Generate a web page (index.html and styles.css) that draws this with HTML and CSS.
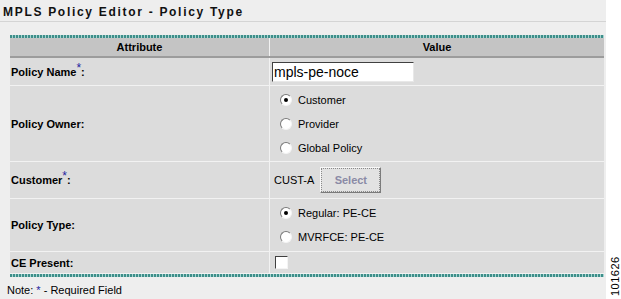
FILE: index.html
```html
<!DOCTYPE html>
<html>
<head>
<meta charset="utf-8">
<link rel="stylesheet" href="styles.css">
</head>
<body>
<div class="page">
  <h1 class="title">MPLS Policy Editor - Policy Type</h1>
  <div class="panel">
    <div class="teal"></div>
    <table class="grid">
      <tr class="head"><th class="c1">Attribute</th><th class="c2">Value</th></tr>
      <tr class="r-name"><td class="lbl">Policy Name<sup class="req">*</sup>:</td><td><input class="txt" type="text" value="mpls-pe-noce"></td></tr>
      <tr class="r-owner"><td class="lbl">Policy Owner:</td><td>
        <div class="radios">
          <label class="opt"><span class="radio on"></span>Customer</label>
          <label class="opt"><span class="radio"></span>Provider</label>
          <label class="opt"><span class="radio"></span>Global Policy</label>
        </div></td></tr>
      <tr class="r-cust"><td class="lbl">Customer<sup class="req">*</sup>:</td><td><div class="custrow"><span>CUST-A</span><span class="btn">Select</span></div></td></tr>
      <tr class="r-type"><td class="lbl">Policy Type:</td><td>
        <div class="radios">
          <label class="opt"><span class="radio on"></span>Regular: PE-CE</label>
          <label class="opt"><span class="radio"></span>MVRFCE: PE-CE</label>
        </div></td></tr>
      <tr class="r-ce"><td class="lbl">CE Present:</td><td><span class="check"></span></td></tr>
    </table>
    <div class="teal"></div>
  </div>
  <div class="note">Note: <span class="req">*</span> - Required Field</div>
</div>
<div class="figno">101626</div>
</body>
</html>
```
FILE: styles.css
```css
html, body { margin: 0; padding: 0; }
body {
  width: 621px; height: 299px; overflow: hidden;
  background: #fff;
  font-family: "Liberation Sans", Arial, sans-serif;
  font-size: 11px; color: #000;
  position: relative;
}
.page { width: 606px; height: 299px; background: #eeeeee; }
.title {
  margin: 0; padding: 5px 0 0 3px; height: 16px;
  font-size: 12px; font-weight: bold; letter-spacing: 1.7px;
  border-bottom: 1px solid #d4d4d4;
  color: #111;
}
.panel { margin: 13px 0 0 10px; width: 594px; }
.teal {
  height: 3px;
  background: repeating-linear-gradient(90deg, #3d8e89 0 2px, #a6d3d0 2px 3px);
}
.grid {
  width: 100%; border-collapse: collapse; table-layout: fixed;
}
.grid th, .grid td { padding: 0; border: 1px solid #f2f2f2; }
.grid tr:first-child th { border-top: 0; }
.grid th:first-child, .grid td:first-child { border-left: 0; }
.grid th:last-child, .grid td:last-child { border-right: 0; }
.head th {
  background: #c4c4c4; height: 18px; font-size: 11px; font-weight: bold;
  border-bottom: 2px solid #9c9c9c;
}
.c1 { width: 259px; }
td { background: #dcdcdc; vertical-align: middle; }
.lbl { font-weight: bold; padding-left: 1px !important; }
.req { color: #1e1ea0; font-weight: normal; font-size: 12px; vertical-align: 4px; }
sup.req { line-height: 0; }
.r-name td { height: 27px; }
.r-owner td { height: 75px; }
.r-cust td { height: 36px; }
.r-type td { height: 52px; }
.r-ce td { height: 21px; }
.txt {
  margin: 0 0 0 2px; width: 139px; height: 18px; box-sizing: content-box;
  padding: 0 0 0 1px; font-family: "Liberation Sans", Arial, sans-serif; font-size: 14px;
  border: 1px solid; border-color: #404040 #e8e8e8 #e8e8e8 #404040; background: #fff;
  display: block;
}
.radios { display: flex; flex-direction: column; gap: 9px; padding-left: 10px; }
.opt { display: flex; align-items: center; gap: 6px; height: 15px; }
.radio {
  width: 10px; height: 10px; border-radius: 50%; background: #fff;
  border: 1px solid; border-color: #7a7a7a #f4f4f4 #f4f4f4 #7a7a7a;
  position: relative;
}
.radio.on::after {
  content: ""; position: absolute; left: 3px; top: 3px; width: 4px; height: 4px;
  border-radius: 50%; background: #000;
}
.custrow { display: flex; align-items: center; gap: 6px; padding-left: 4px; }
.btn {
  width: 59px; height: 24px; display: flex; align-items: center; justify-content: center;
  background: #e2e2e2; color: #8a8aa6; font-weight: bold; font-size: 11px;
  border: 1px solid; border-color: #f8f8f8 #7c7c7c #7c7c7c #f8f8f8;
  outline: 1px dotted #8a8a8a; outline-offset: -2px;
}
.check {
  display: block; margin-left: 5px; width: 11px; height: 11px; background: #fff;
  border: 1px solid; border-color: #404040 #f4f4f4 #f4f4f4 #404040;
}
.note { padding: 7px 0 0 7px; font-size: 11px; }
.note .req { vertical-align: 0; font-size: 11px; }
.figno {
  position: absolute; width: 34px;
  transform: rotate(-90deg); transform-origin: 0 0; top: 296px; left: 609px;
  font-size: 11px; color: #000; letter-spacing: 0.5px;
}
```
